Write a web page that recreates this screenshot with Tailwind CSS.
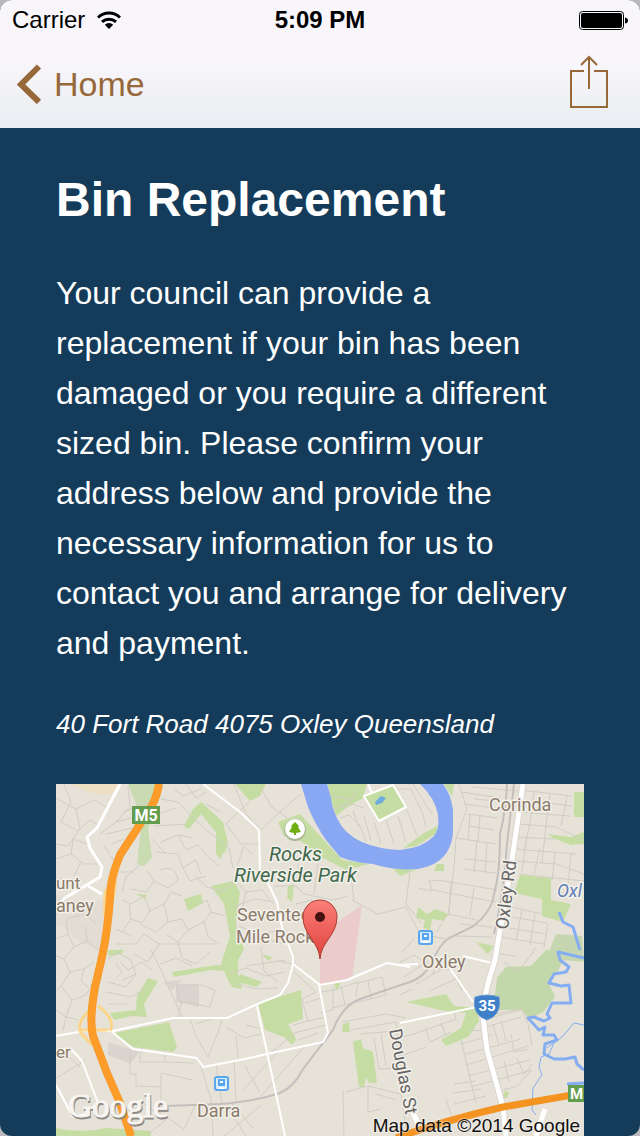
<!DOCTYPE html>
<html lang="en">
<head>
  <meta charset="UTF-8">
  <meta name="viewport" content="width=device-width, initial-scale=1.0">
  <title>Bin Replacement</title>
  <script src="https://cdn.jsdelivr.net/npm/@tailwindcss/browser@4"></script>
</head>
<body class="bg-[#b9b8bc] font-['Liberation_Sans',Arial,sans-serif]">
  <div class="flex min-h-screen flex-col overflow-hidden rounded-xl bg-[#143c5a]">
    <header class="bg-linear-to-b from-[#f8f6fa] from-50% to-[#e9edf1] text-black">
      <!-- Status bar -->
      <div class="grid h-10 grid-cols-3 items-center pr-3 pl-3 text-2xl">
        <div class="flex items-center gap-3">
          <span>Carrier</span>
          <svg class="h-5 w-6" viewBox="0 0 24 20" fill="none" stroke="#000" stroke-width="3">
            <path d="M1 7.500A16 16 0 0 1 23 7.500M5 11.800A10.500 10.500 0 0 1 19 11.800" />
            <path d="M12 19L7.800 14.800A6 6 0 0 1 16.200 14.800Z" fill="#000" stroke="none" />
          </svg>
        </div>
        <span class="text-center font-bold">5:09 PM</span>
        <svg class="h-5 w-[49px] justify-self-end" viewBox="0 0 49 20">
          <rect x=".5" y="1.500" width="44" height="18" rx="3" fill="none" stroke="#000" />
          <rect x="2" y="3" width="41" height="15" rx="2" />
          <path d="M46 7.500Q49 8 49 10.500T46 13.500Z" />
        </svg>
      </div>
      <!-- Navigation bar -->
      <nav class="flex h-22 items-center justify-between pr-8 pl-4 text-[#97683a]">
        <a href="#" class="flex items-center gap-3 text-[34px]">
          <svg class="h-10 w-[26px]" viewBox="0 0 26 40" fill="none" stroke="currentColor" stroke-width="6">
            <path d="M23 2.500L5 20.500L23 38" />
          </svg>
          <span>Home</span>
        </a>
        <button type="button" aria-label="Share" class="pb-1">
          <svg class="h-[54px] w-10" viewBox="0 0 40 54" fill="none" stroke="currentColor" stroke-width="2">
            <path d="M16 16H3V52H39V16H26M21 34V2M13 10L21 2L29 10" />
          </svg>
        </button>
      </nav>
    </header>

    <main class="flex grow flex-col px-14 pt-11 text-white">
      <h1 class="text-5xl leading-14 font-bold">Bin Replacement</h1>
      <p class="mt-10 text-[32px] leading-[50px]">Your council can provide a replacement if your bin has been damaged or you require a different sized bin. Please confirm your address below and provide the necessary information for us to contact you and arrange for delivery and payment.</p>
      <address class="mt-9 text-[26px] leading-10">40 Fort Road 4075 Oxley Queensland</address>

      <!-- Map -->
      <svg class="mt-10 w-full font-[Roboto,sans-serif]" viewBox="0 0 528 352" role="img" aria-label="Map of Oxley">
        <defs>
          <linearGradient id="pin" x2="0" y2="1">
            <stop stop-color="#fb7f78" />
            <stop offset="1" stop-color="#e0413c" />
          </linearGradient>
        </defs>
        <rect width="528" height="352" fill="#e7e2d8" />
        <path d="M15 0H65L56 10Q35 12 15 0Z" fill="#eddfc3" />
        <path d="M0 110Q25 122 50 116L48 170L20 155Q8 140 0 142Z" fill="#dfdad4" opacity=".7" />

        <!-- Parks -->
        <g fill="#c5dda2">
          <path d="M72 0H106L92 45L96 73L88 82L81 80L85 45L80 20Z" fill="#c9dbb0" />
          <path d="M145 18L167 38L172 60L164 75L160 70L160 48L145 30L133 45L128 42L137 25Z" />
          <path d="M179 0H210L204 12L194 17Z" />
          <path d="M164 42Q175 52 169 68L164 71Z" />
          <path d="M222 38L244 30L267 55L286 76L313 80L290 86L267 74L243 56L228 52Z" />
          <path d="M271 0H311L307 14L290 24L280 32Z" />
          <path d="M308 12L337 1L350 23L323 37Z" />
          <path d="M388 0H398L396 12ZM368 49L381 42V49L360 62L347 64ZM336 83L360 86L344 92ZM381 80H388V87H378Z" />
          <path d="M518 8H528V33H518ZM492 50L515 53L528 48V60L515 61L497 54Z" />
          <path d="M464 91L495 94V116L515 120L507 138L486 132V115L458 109Z" />
          <path d="M362 123L371 130L380 125L392 130L388 137L376 135L374 146L367 144L369 136L360 134ZM420 158L438 162L432 170Z" />
          <path d="M178 97L184 108L180 140L188 165L182 176V190L186 205L176 203L172 196L165 180L174 152L168 120L155 102ZM184 190L206 198L200 203L182 198ZM128 115L145 110L147 119L132 127ZM51 166L68 166L65 170L53 172ZM80 110L91 111L89 115ZM232 102L238 100L236 118L231 114ZM205 170L216 173L213 177Z" />
          <path d="M54 229L80 226L81 212L92 194L102 197L88 220L91 233L76 232L58 236ZM116 188L160 181L182 182L181 188L155 186L118 193Z" />
          <path d="M58 249L113 238L121 263L117 268L77 263Z" />
          <path d="M202 219L245 206L247 235L232 240L240 255L236 261L228 253L209 246Z" />
          <path d="M287 240L293 238L294 248H286ZM297 258L305 255L307 264L317 268L321 299H313L310 293L308 303H303ZM278 200L285 198L281 207Z" />
          <path d="M450 183L475 182L490 166H512L503 185L493 200L499 213L487 228L473 235L466 226L437 226L441 194Z" fill="#c3d8aa" />
          <path d="M500 150L526 152L528 178L505 176L494 165Z" fill="#c5d6b0" />
          <path d="M350 218L390 210L398 222L421 224L423 237L412 253L390 262L385 256L405 244L410 229L389 227ZM449 307L453 308L451 314H446Z" />
          <path d="M0 344Q25 350 50 344L95 347V352H0Z" />
        </g>
        <path d="M264 201V150L306 121L296 195L264 202Z" fill="#ecccca" />
        <path d="M120 201L143 200L143 223L120 218ZM107 198L126 196L116 206ZM52 258L84 268L74 280L52 271Z" fill="#dad3ce" />

        <!-- Local streets -->
        <g fill="none" stroke="#d2cdc4">
          <path d="M0 14L20 25L38 16L52 24M8 0L15 18L5 38L22 47M20 25L24 45L12 62L0 60M24 45L34 36L44 42M0 75L15 70L28 80L42 80M15 70L17 55L31 60M18 92L25 78M0 95L22 96M72 3L74 23L60 38L44 50M68 28L86 20L95 18M60 38L82 32M50 50L76 44M56 60L68 55M48 62L54 70M55 72L60 80" />
          <path d="M105 15L122 18L137 34L155 50L173 64L177 84M103 30L120 24M98 42L130 40M105 58L122 51L137 54M122 51L130 66L142 61L152 73L163 82M100 68L122 70L127 84L140 76L145 90M104 86Q120 80 122 96L112 104L98 97M127 84L134 97L150 92M91 86L98 97L90 108L75 105M85 80L70 93L66 108M78 88L63 88M96 55L110 70M118 5L127 12L145 5M130 0L140 14L150 8M150 20L164 28" />
          <path d="M66 116L75 120L88 112L94 127L86 139L75 135L66 148M75 135L73 120M94 127L108 120L115 108L126 112M108 120L112 138L100 148L84 140M112 138L126 135L132 146L122 158L110 150M132 146L148 138L155 128M148 138L152 153L164 160M60 160H80L88 150L103 160L92 178L78 170M103 160H160M122 158L126 174L140 180L154 168M64 178L72 186L86 178L96 186M66 196L80 190M140 92L150 103L164 106M142 120L151 116L155 128L169 132M60 145L76 152" />
          <path d="M0 155L12 150L18 163L8 175L0 172M18 163L31 157L42 166M12 150L10 135L30 130L40 140M31 157L29 142M8 175L14 188L28 185L38 178M14 188L5 202L16 216L30 211L36 200M0 207L5 202M16 216L10 233L23 236M28 185L25 197L32 203M0 226L10 233L7 247" />
          <path d="M52 175L62 169L75 176L80 190L70 203L52 198M50 208L75 213L90 204M52 220L72 220M95 166L104 184L116 211L126 233M60 180L66 188L60 194M104 180L120 174L136 182M120 201H146L159 206L154 223L124 217ZM126 217L122 234M134 235L140 252L152 273L163 246L166 236M155 235L140 240" />
          <path d="M0 294L30 276M24 283L13 273M74 267V290H80V302L105 303V289L137 296M86 264L83 278H109V268M105 303V330M109 278L138 279M142 274L155 315L157 352M160 280L166 320M112 334L128 345L140 320M88 320L110 336L92 350M148 335L168 318L190 352M168 352L205 321M176 320L198 345" />
          <path d="M178 0L190 30L205 46L225 27L245 10M205 4L215 22L236 38M194 17L170 40L185 60H203M180 85L188 62L196 70M164 108L180 98L190 108L206 106L214 116M178 122L200 115L218 118M190 108L186 125L206 135L222 130M182 142L205 150L226 146M190 160L210 155L228 160M190 182L230 176M205 163L208 187L222 198M172 190L190 184L210 192L228 188M182 200L200 205L222 204M218 102H240L248 110L278 116L292 112M242 72V100M262 80L258 110M240 120L256 116L258 130M240 150L254 160M296 116L322 130L350 123L364 150L390 155M294 84L298 116" />
          <path d="M278 25L296 20L308 24M284 34L293 31L304 42L310 58M297 27L303 43M308 32L315 57M318 38L325 60M330 36L338 60M342 32L350 58M351 26L361 52M340 5L355 5L366 28L370 43M357 0L376 30M285 22L297 15M274 12L296 15L302 5" />
          <path d="M403 0L411 25L400 54L398 84L392 132M405 8L445 14M408 20L445 25M412 30L442 34M400 54L440 60M413 42L438 46M414 30L412 55M424 32L422 58M408 85L440 89M409 75L440 78M421 56L418 89M431 58L429 89M373 96L388 97L441 106M373 96L376 106L440 118M354 86L350 120L366 140M395 97L393 130L420 136M418 104L414 132M404 140L436 143M399 152L436 153M362 104L376 107M390 132L381 148" />
          <path d="M416 3L463 7M418 15L462 19M465 6L516 12M465 16L516 22M463 28L514 32M462 40L500 43L528 56M460 53L498 55M458 65L520 70M458 77L500 80L528 90M463 90L528 97M478 8L474 38L468 68M494 10L490 42L486 79M511 12L505 42M470 57L466 88M484 64L478 90M499 68L496 96M515 70L512 100M528 104L500 110M447 100L455 117L450 146M452 122L486 130M450 132L491 139M447 143L490 150M445 153L488 160M466 126L460 157M479 130L474 161M492 140L488 163" />
          <path d="M237 180L222 177M238 188L260 208L245 216M246 215L252 237L270 233M249 219L265 214M237 241L255 236M238 249L270 241M242 256L262 249M212 271L240 248M189 282L204 309M178 275L180 317M187 306L223 267M205 312L248 263M190 241L206 245M170 243L188 254L206 250M180 252L182 273M265 208L282 205L302 198L300 212M277 202V224L300 218M285 202L289 221M302 199L326 193L330 211L302 218M312 196L315 215M278 225L265 229M286 238L330 230L350 234M295 246L340 238L344 282M304 250L340 247M318 254L323 285L343 284M325 250L330 282M290 308L312 302L345 310L350 344M287 306L288 352M312 302V328L325 325M320 310L340 316" />
          <path d="M344 178L358 171L378 184L396 186M348 193L372 177M360 200L388 184M373 207L404 193M381 178L377 190M397 188L406 207M346 168L358 155M356 205L344 211M344 254L367 247L400 235M344 272L370 263M369 243L374 258L395 248M385 239L390 252M400 236L398 226M405 256L420 319M412 247L430 246M405 260L436 251M410 270L465 255M410 281L472 262M412 292L474 276M415 303L476 286M398 300L420 297M397 309L425 305M398 320L430 312M430 243L465 233M430 235L465 226M466 226L472 240L476 262M455 250L458 268L473 265M437 240L443 262M445 236L450 257M436 280L444 300M448 277L453 298M461 274L468 290L476 280M475 286L462 302L440 308M440 230L465 225M390 315L395 331M448 178L462 188L480 164M444 170L460 172" />
        </g>
        <path d="M451 0Q450 26 444 50Q444 90 438 110Q436 128 416 143L393 154Q384 160 377 176Q369 194 351 199Q324 208 304 215Q286 222 277 246L247 285Q238 303 224 309Q200 317 164 320L110 322M458 0L451 60Q448 110 438 150" fill="none" stroke="#c3bfbc" stroke-width="2" />

        <!-- River and creek -->
        <path d="M245 0L252 23Q260 42 270 56L284 73Q300 79 317 80Q338 87 362 85Q383 81 391 68Q397 58 397 46V26Q395 10 387 0H364Q379 14 382 31Q384 46 377 53Q366 64 344 66Q322 65 306 58Q288 50 281 34Q276 24 275 14L271 0Z" fill="#89a8f4" />
        <path d="M319 18L325 12L330 14L326 19L320 21Z" fill="#6daadd" />
        <g fill="none" stroke="#85adf1" stroke-linejoin="round">
          <path d="M503 128L507 138L517 143L524 166M528 174L502 168L504 176L513 183L510 188L498 190L493 199L505 202L513 201L515 219L496 219L491 230L494 234L488 237L478 233L472 234L483 246L489 243L487 251L498 251L501 256L489 260L488 270L498 275H509L519 273L521 280L528 286M511 300L528 299" stroke-width="3" />
          <path d="M528 241L518 239L507 252L498 259L493 270L485 273L483 283L486 291L477 304L476 326L480 331M498 259L491 264" />
        </g>

        <!-- Main roads -->
        <g fill="none" stroke="#fff" stroke-width="3" stroke-linejoin="round">
          <path d="M64 0L41 44L31 53L34 64L46 83L44 93L9 114L0 122M32 102L46 110" />
          <path d="M147 0L184 28L203 46L204 86L214 103L221 118L226 143L237 173V180L264 201L291 196L331 179L354 183M237 180L232 199L224 211L199 221L171 234L117 234L57 247L34 246L0 252" stroke-width="2" />
          <path d="M55 247L77 265L141 274L147 283L184 276L211 270L267 258L272 249L263 201M201 222L212 273L229 352M344 239L421 223M391 180L417 218M407 172L436 179M344 181L362 180" stroke-width="2" />
          <path d="M0 301L17 333L30 330L42 319L26 277L16 266L8 265" stroke-width="2" />
          <path d="M308 12L337 1L350 23L323 37ZM316 9L312 0" stroke-width="2" />
          <path d="M467 0L456 76L439 176L432 199Q426 225 427 233L431 266L447 323L450 352" stroke="#d9d5cf" stroke-width="7" />
          <path d="M467 0L456 76L439 176L432 199Q426 225 427 233L431 266L447 323L450 352" stroke-width="5" />
          <path d="M489 325L480 352M356 326L362 340" stroke-width="5" />
        </g>

        <!-- Motorways -->
        <g fill="none">
          <path d="M58 88Q62 105 52 130M50 105Q47 120 50 140M42 222Q60 235 54 247M32 228Q20 240 25 249L36 261M25 246H52" stroke="#fbd58a" stroke-width="3" />
          <path d="M103 0Q100 18 91 29L79 48L64 71Q54 95 54 113Q52 145 46 173L39 203Q33 236 37 252L51 289L64 319L75 352" stroke="#f09a35" stroke-width="8" />
          <path d="M103 0Q100 18 91 29L79 48L64 71Q54 95 54 113Q52 145 46 173L39 203Q33 236 37 252L51 289L64 319L75 352" stroke="#fd9c29" stroke-width="7" />
          <path d="M340 354Q390 336 447 323L528 309" stroke="#f39321" stroke-width="7" />
        </g>

        <!-- Shields and stations -->
        <g>
          <rect x="76" y="22" width="28" height="18" fill="#659d4e" />
          <text x="90" y="37" text-anchor="middle" font-size="16" font-weight="700" fill="#fff">M5</text>
          <rect x="512" y="301" width="20" height="17" fill="#659d4e" />
          <text x="514" y="315" font-size="15" font-weight="700" fill="#fff">M</text>
          <path d="M419 213Q431 209 443 213Q445 224 440 230Q437 234 431 236Q424 234 421 229Q417 223 419 213Z" fill="#3e7fc7" stroke="#6f9fd4" />
          <text x="431" y="227" text-anchor="middle" font-size="15" font-weight="700" fill="#fff">35</text>
          <g id="station">
            <rect x="363" y="147" width="13" height="13" rx="2" fill="#dcecfa" stroke="#57a6ee" stroke-width="2" />
            <path d="M366 149H373V156H366Z" fill="#57a6ee" />
            <path d="M368 151H371V153H368ZM367 157H372V159H367Z" fill="#fff" />
          </g>
          <use href="#station" x="-204" y="146" />
          <circle cx="239" cy="46" r="11" fill="#a9b792" />
          <circle cx="239" cy="45" r="10" fill="#fff" />
          <path d="M239 38L243 42L242 43L245 48L240 49V51H238V49L233 48L236 43L235 42Z" fill="#6fae12" />
        </g>

        <!-- Labels -->
        <g fill="#8b7b6a" stroke="#f3f0ea" stroke-width="3" paint-order="stroke" stroke-linejoin="round" font-size="18">
          <text x="433" y="27">Corinda</text>
          <text x="0" y="105" font-size="17">unt</text>
          <text x="0" y="128">aney</text>
          <text x="0" y="274" font-size="17">er</text>
          <text x="181" y="137">Seventeen</text>
          <text x="180" y="159">Mile Rocks</text>
          <text x="366" y="184">Oxley</text>
          <text x="141" y="333">Darra</text>
          <g fill="#41694d" font-size="20" font-style="italic">
            <text x="213" y="77">Rocks</text>
            <text x="178" y="98">Riverside Park</text>
          </g>
          <text x="501" y="113" fill="#6280b5" font-style="italic">Oxl</text>
          <text transform="translate(452 146) rotate(-83)" font-size="18" fill="#666">Oxley Rd</text>
          <text transform="translate(333 246) rotate(79)" font-size="18" fill="#666">Douglas St</text>
        </g>

        <!-- Location pin -->
        <path d="M264 175C263 158 247 151 247 133A17 17 0 0 1 281 133C281 151 265 158 264 175Z" fill="url(#pin)" stroke="#a83a36" />
        <circle cx="264" cy="133" r="5" fill="#44110f" />

        <g font-family="Liberation Serif, serif" font-size="34">
          <text x="13" y="335" fill="#8f8a84" stroke="#8f8a84">Google</text>
          <text x="12" y="333" fill="#f7f5f1" stroke="#f7f5f1">Google</text>
        </g>
        <text x="524" y="348" text-anchor="end" font-family="Liberation Sans, sans-serif" font-size="19" fill="#111" stroke="#fff" stroke-opacity=".4" stroke-width="2" paint-order="stroke">Map data ©2014 Google</text>
      </svg>
    </main>
  </div>
</body>
</html>
